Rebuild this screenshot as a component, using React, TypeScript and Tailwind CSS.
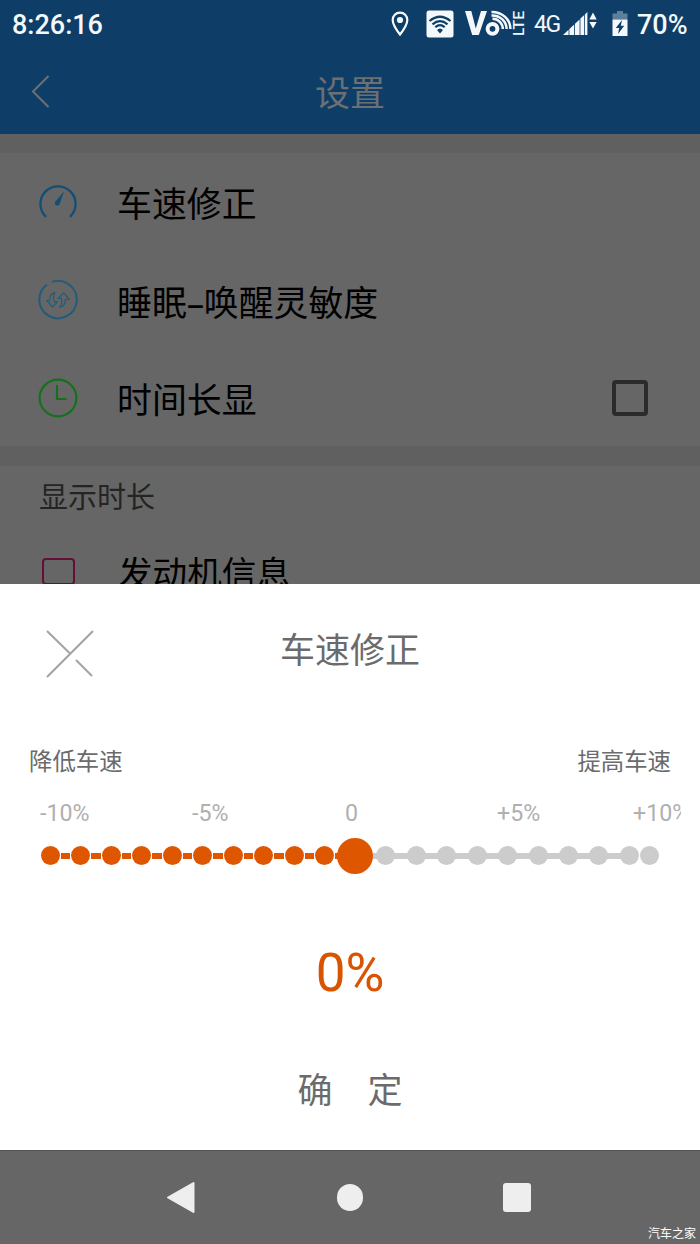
import React, { useState } from 'react';

interface SettingItem {
  label: React.ReactNode;
  icon: React.ReactNode;
  checkbox?: boolean;
}

const SpeedIcon: React.FC = () => (
  <svg width="40" height="40" viewBox="0 0 40 40" fill="none" stroke="#124e75" strokeWidth="2.3">
    <path d="M8 33.8A17.6 17.6 0 1 1 32 33.8" />
    <path d="M26 8.5L18.4 17.6A2.6 2.6 0 1 0 22 20Z" fill="#124e75" stroke="none" />
  </svg>
);

const SleepIcon: React.FC = () => (
  <svg width="40" height="40" viewBox="0 0 40 40" fill="none" stroke="#215c7a">
    <path d="M14 1.9A18.7 18.7 0 1 1 9 4.5" strokeWidth="2" />
    <path
      d="M17 12.5C12.5 13.5 11.5 17 11.8 20.5H8.8L14.6 27L19.4 21.8H16.4C15 18.5 15.4 15 17 12.5Z"
      strokeWidth="1.2"
      strokeLinejoin="round"
    />
    <path
      d="M21.5 27.5C26 26.5 27.5 22.8 27.3 19.5H31.4L25.8 12.8L20.2 18.5H23.4C24.4 22 23.5 25 21.5 27.5Z"
      strokeWidth="1.2"
      strokeLinejoin="round"
    />
  </svg>
);

const ClockIcon: React.FC = () => (
  <svg width="40" height="40" viewBox="0 0 40 40" fill="none" stroke="#15701c" strokeWidth="2.1">
    <circle cx="20" cy="20" r="18.4" />
    <path d="M19 7V21H28.5" />
  </svg>
);

const settings: SettingItem[] = [
  { label: '车速修正', icon: <SpeedIcon /> },
  {
    label: (
      <>
        睡眠<span className="inline-block w-[17px] text-center font-['Noto_Sans']">–</span>唤醒灵敏度
      </>
    ),
    icon: <SleepIcon />,
  },
  { label: '时间长显', icon: <ClockIcon />, checkbox: true },
];

const StatusBar: React.FC = () => (
  <div className="flex h-12 items-center pl-3 pr-3 font-['Roboto',sans-serif] text-[#f4f8fb]">
    <span className="w-[100px] pt-[2px] text-[27px] font-medium leading-none">8:26:16</span>
    <svg className="ml-auto" width="18" height="26" viewBox="0 0 18 26" fill="none">
      <path d="M9 1.6C4.8 1.6 1.7 4.8 1.7 8.9C1.7 14 9 23.5 9 23.5S16.3 14 16.3 8.9C16.3 4.8 13.2 1.6 9 1.6Z" stroke="currentColor" strokeWidth="2.2" />
      <circle cx="9" cy="9" r="3.1" fill="currentColor" />
    </svg>
    <svg className="ml-[17px]" width="28" height="28" viewBox="0 0 28 28" fill="none">
      <rect x="0.5" y="0.5" width="27" height="27" rx="2.5" fill="currentColor" />
      <path d="M3.5 11Q14 2.5 24.5 11M6.5 14.3Q14 8 21.5 14.3M9.3 17.3Q14 13 18.7 17.3" stroke="#0e3e67" strokeWidth="2.2" />
      <path d="M11 20Q14 17 17 20L14 23.5Z" fill="#0e3e67" />
    </svg>
    {/* VoLTE */}
    <svg className="ml-[11px]" width="62" height="28" viewBox="0 0 62 28" fill="none">
      <path d="M0 1H6.3L10.8 18.5L16 1H22L13.8 25H7.2Z" fill="currentColor" />
      <circle cx="27.5" cy="18.8" r="4.9" stroke="currentColor" strokeWidth="4" />
      <path d="M27.5 8.8C33.5 8.8 37.8 13.5 37.8 19M26.5 5.4C35.5 5.2 41.6 11.5 41.6 19M26.5 2C37.5 2 45.4 9.3 45.4 19" stroke="currentColor" strokeWidth="2.5" />
      <text transform="translate(59 26) rotate(-90)" fontSize="15.5" fontWeight="500" fontFamily="Roboto" textLength="25" lengthAdjust="spacingAndGlyphs" fill="currentColor">LTE</text>
    </svg>
    <span className="ml-[7px] w-[27px] pt-px text-[23px] leading-none tracking-[-1.5px]">4G</span>
    <svg className="ml-[2px]" width="35" height="28" viewBox="0 0 35 28" fill="currentColor">
      <path d="M0 25L5.6 19.8V25ZM6.4 25V19L11.2 14.6V25ZM12 25V13.8L16.6 9.4V25ZM17.4 25V8.6L21 5.2V25ZM21.8 25V4.4L24.4 2V25Z" />
      <path d="M26.3 9.5L30 2.5L33.7 9.5ZM26.3 12L30 18.5L33.7 12Z" />
    </svg>
    <svg className="ml-[14px]" width="16" height="28" viewBox="0 0 16 28">
      <path d="M5 1H11V3.5H15.5V9.5H0.5V3.5H5Z" fill="#5e7f9b" />
      <path d="M0.5 9.5H15.5V26H0.5Z" fill="currentColor" />
      <path d="M10 10L3.8 18H7.2L6 24L12.2 15.7H8.8Z" fill="#0e3e67" />
    </svg>
    <span className="ml-[9px] w-[51px] pt-[2px] text-[27px] font-medium leading-none">70%</span>
  </div>
);

const marks = ['-10%', '-5%', '0', '+5%', '+10%'];
const markClasses = ['w-[152px]', 'w-[153px]', 'w-[152px]', 'w-[136px]', 'w-[48px] overflow-hidden'];

const App: React.FC = () => {
  const [value] = useState<number>(0);
  const step = value + 10;

  return (
    <div className="flex h-[1244px] w-[700px] flex-col overflow-hidden bg-[#666666] font-['Roboto','Noto_Sans_CJK_SC',sans-serif]">
      {/* Barra superior */}
      <header className="h-[134px] shrink-0 bg-[#0e3e67]">
        <StatusBar />
        <div className="flex h-[88px] items-center justify-between px-[31px] text-[#6c7073]">
          <svg width="20" height="34" viewBox="0 0 20 34" fill="none" stroke="currentColor" strokeWidth="2">
            <path d="M17.5 1L2 16.5L17.5 32" />
          </svg>
          <h1 className="pt-[5px] text-[35px] leading-none">设置</h1>
          <div className="w-5" />
        </div>
      </header>

      {/* Lista de ajustes */}
      <main className="h-[450px] shrink-0 overflow-hidden text-black">
        <div className="h-[19px] bg-[#606060]" />
        {settings.map((item, i) => (
          <div key={i} className="flex h-[97.6px] items-center pl-[38px] pr-[52px] pt-[2px]">
            {item.icon}
            <span className="ml-[39px] pt-2 text-[34.9px] leading-none">{item.label}</span>
            {item.checkbox && <div className="ml-auto size-9 rounded-[4px] border-4 border-[#2b2b2b]" />}
          </div>
        ))}
        <div className="h-5 bg-[#606060]" />
        <div className="flex h-[60px] items-center pl-[39px] pt-[6px] text-[29px] leading-none text-[#242424]">显示时长</div>
        <div className="flex items-start pl-[42px] pt-[32px]">
          <div className="h-[27px] w-[33px] rounded-[4px] border-[2.5px] border-[#660d38]" />
          <span className="ml-[43px] -mt-px text-[34.6px] leading-[35px]">发动机信息</span>
        </div>
      </main>

      {/* Panel de corrección */}
      <section className="flex h-[566px] shrink-0 flex-col bg-white text-[#6b6b6b]">
        <div className="flex h-[130px] items-center justify-between px-[46px]">
          <svg className="mt-[10px]" width="48" height="48" viewBox="0 0 48 48" fill="none" stroke="#a3a3a3" strokeWidth="2">
            <path d="M47 1L1 47M1 1L24 23.5M30 30L46 46" />
          </svg>
          <h2 className="pt-[5px] text-[35px] leading-none">车速修正</h2>
          <div className="w-12" />
        </div>
        <div className="mt-9 flex justify-between px-[29px] text-[23.4px] leading-6">
          <span>降低车速</span>
          <span>提高车速</span>
        </div>
        <div className="mt-[27px] flex pl-10 text-[23.2px] leading-6 text-[#b0b0b0]">
          {marks.map((m, i) => (
            <span key={m} className={markClasses[i]}>{m}</span>
          ))}
        </div>
        <div className="mt-[13px] flex h-[35px] items-center pl-[41px]">
          {Array.from({ length: 21 }, (_, i) => (
            <React.Fragment key={i}>
              {i === step ? (
                <div className="z-10 -mx-[8.5px] size-9 shrink-0 rounded-full bg-[#de5700]" />
              ) : (
                <div className={`size-[19px] shrink-0 rounded-full ${i < step ? 'bg-[#de5700]' : 'bg-[#cccccc]'} ${i === 20 ? 'ml-px' : ''}`} />
              )}
              {i < 19 && (
                <div className={i < step ? 'mx-[1px] h-[6px] w-[9.48px] bg-[#de5700]' : '-mx-[1px] h-[6px] w-[13.48px] bg-[#cccccc]'} />
              )}
            </React.Fragment>
          ))}
        </div>
        <div className="mt-[72px] text-center text-[53px] leading-[56px] text-[#d95400]">{value}%</div>
        <button className="mt-[71px] flex justify-center gap-[35px] text-[35px] leading-[40px]">
          <span>确</span>
          <span>定</span>
        </button>
      </section>

      {/* Navegación de Android */}
      <nav className="relative flex h-[94px] shrink-0 items-center border-t border-[#555555] pl-[166px]">
        <svg width="30" height="34" viewBox="0 0 30 34" fill="#eeeeee" stroke="#eeeeee" strokeWidth="2" strokeLinejoin="round">
          <path d="M2 16.5L27.5 2V31Z" />
        </svg>
        <div className="ml-[141px] h-[27px] w-[26px] rounded-full bg-[#eeeeee]" />
        <div className="ml-[140px] h-[29px] w-[28px] rounded-[3px] bg-[#eeeeee]" />
        <span className="absolute right-[4px] bottom-[3px] text-[12px] leading-[14px] text-white">汽车之家</span>
      </nav>
    </div>
  );
};

export default App;
